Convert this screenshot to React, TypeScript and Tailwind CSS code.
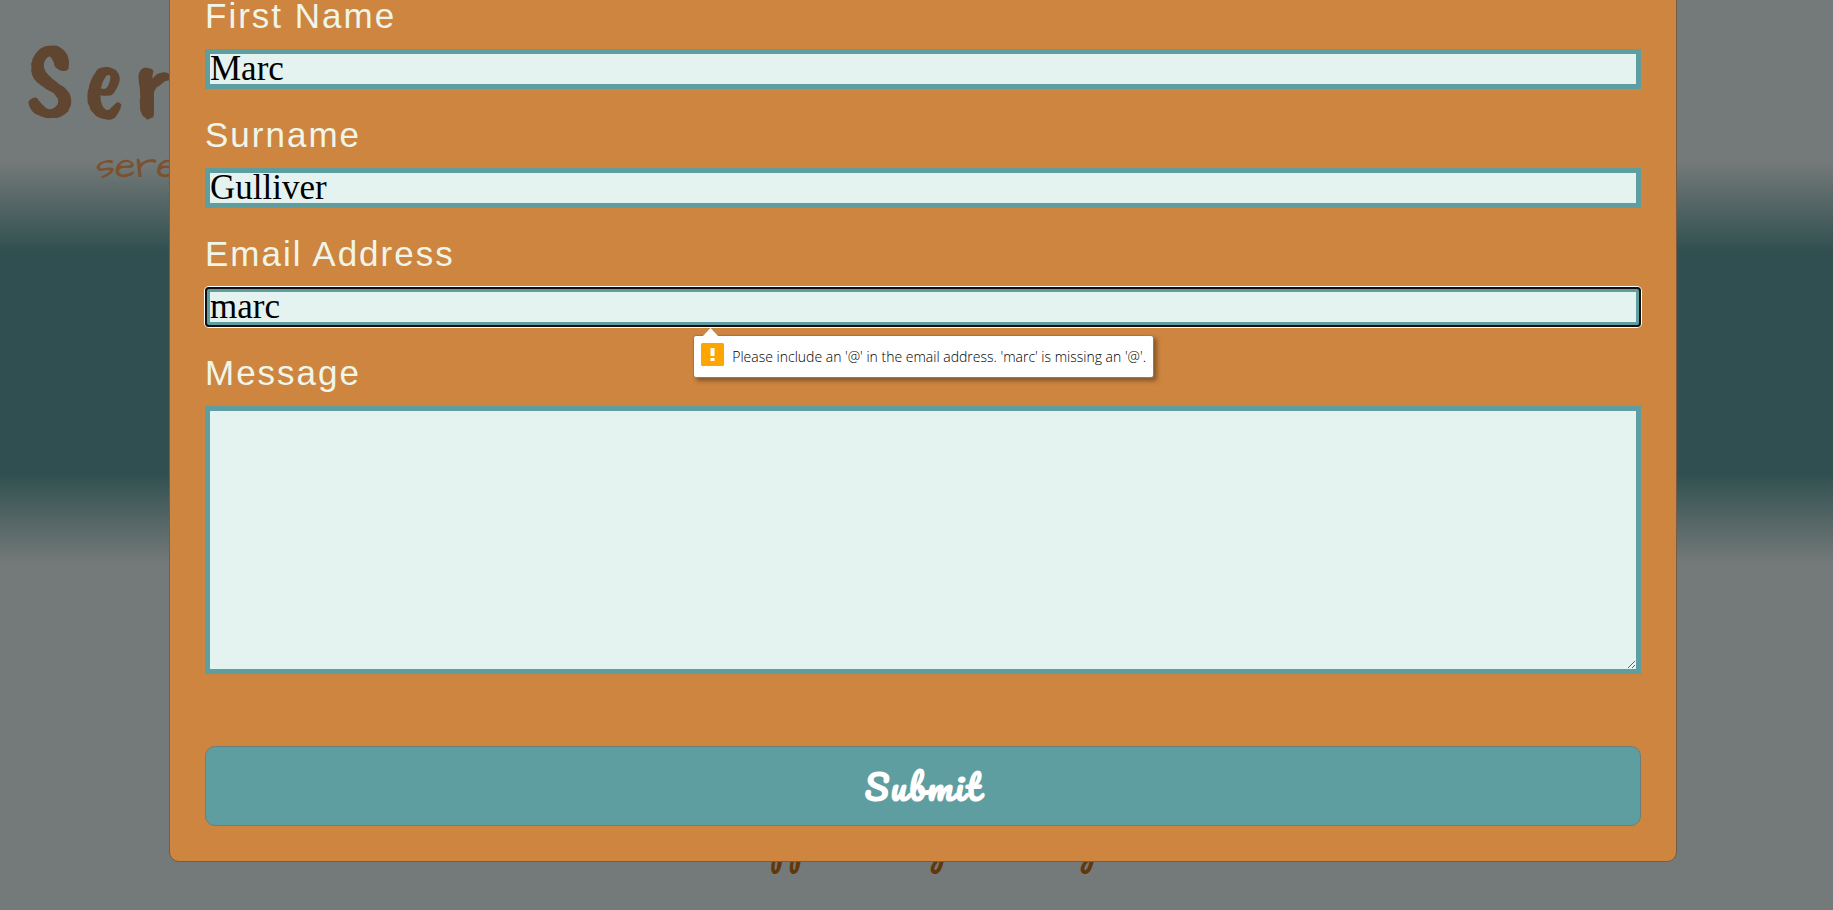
import type { ReactNode } from 'react';

const inputClass =
  "block h-10 w-full border-5 border-[#5f9ea0] bg-[#e4f3f0] p-0 font-['Liberation_Serif',serif] text-[35px] leading-[30px] text-black outline-none";

function Field({ id, label, children }: { id: string; label: string; children: ReactNode }) {
  return (
    <div className="relative flex flex-col gap-[13px]">
      <label
        htmlFor={id}
        className="h-10 font-['Liberation_Sans',sans-serif] text-[35px] leading-10 tracking-[2px] text-[#f0f5e9]"
      >
        {label}
      </label>
      {children}
    </div>
  );
}

function ValidationBubble({ message }: { message: string }) {
  return (
    <div
      role="alert"
      className="absolute top-full left-[34%] z-10 mt-2 flex h-[43px] items-center gap-2 rounded-[3px] border border-[#8a7d70] bg-white px-[7px] shadow-[3px_3px_4px_rgba(0,0,0,0.35)]"
    >
      <svg className="absolute -top-2 left-2 h-[9px] w-[17px]" viewBox="0 0 17 9" aria-hidden="true">
        <path d="M0 9 8.5 0 17 9Z" fill="#fff" />
      </svg>
      <svg className="mb-1 size-[23px] shrink-0" viewBox="0 0 23 23" aria-hidden="true">
        <rect width="23" height="23" rx="1.5" fill="#ffa500" />
        <path d="M9.5 5h4v8h-4zM9.5 15h4v3h-4z" fill="#fff" />
      </svg>
      <span className="font-['Segoe_UI','Open_Sans',sans-serif] text-sm font-light whitespace-nowrap text-black">{message}</span>
    </div>
  );
}

export default function App() {
  return (
    <div className="relative h-screen overflow-hidden bg-[#747a79]">
      <div className="absolute inset-0 flex flex-col" aria-hidden="true">
        <div className="h-[162px] shrink-0" />
        <div className="h-[90px] shrink-0 bg-linear-to-b from-[#747a79] to-[#304f50]" />
        <div className="h-[221px] shrink-0 bg-[#304f50]" />
        <div className="h-[90px] shrink-0 bg-linear-to-b from-[#304f50] to-[#747a79]" />
      </div>

      <header className="absolute top-6 left-[26px] flex flex-col gap-[14px]">
        <span className="font-['Caveat_Brush',cursive] text-[112px] leading-[108px] tracking-[8px] text-[#604530]">
          Ser
        </span>
        <span className="pl-[70px] font-['Architects_Daughter',cursive] text-[38px] leading-10 text-[#7c5130]">
          sere
        </span>
      </header>

      <div
        className="absolute top-[806px] left-[42%] flex pl-[6px] font-['Pacifico',cursive] text-[38px] leading-[68px] text-[#643709]"
        aria-hidden="true"
      >
        <span className="w-[155px]">pp</span>
        <span className="w-[150px]">g</span>
        <span>g</span>
      </div>

      <form
        noValidate
        onSubmit={(e) => e.preventDefault()}
        className="relative -mt-10 mr-[156px] ml-[169px] flex flex-col gap-[26px] rounded-[10px] border border-[#735d49] bg-[#cd853f] p-[35px]"
      >
        <Field id="first-name" label="First Name">
          <input id="first-name" type="text" defaultValue="Marc" className={inputClass} />
        </Field>
        <Field id="surname" label="Surname">
          <input id="surname" type="text" defaultValue="Gulliver" className={inputClass} />
        </Field>
        <Field id="email" label="Email Address">
          <input
            id="email"
            type="email"
            defaultValue="marc"
            aria-invalid="true"
            className="block h-10 w-full rounded-[4px] border-5 border-[#5f9ea0] bg-[#e4f3f0] p-0 font-['Liberation_Serif',serif] text-[35px] leading-[30px] text-black shadow-[0_0_0_1px_#fff] outline-2 -outline-offset-2 outline-[#101010]"
          />
          <ValidationBubble message="Please include an '@' in the email address. 'marc' is missing an '@'." />
        </Field>
        <Field id="message" label="Message">
          <textarea
            id="message"
            className="block h-[268px] w-full resize border-5 border-[#5f9ea0] bg-[#e4f3f0] p-0 font-['Liberation_Serif',serif] text-[35px] text-black outline-none"
          />
        </Field>
        <button
          type="submit"
          className="mt-[46px] h-20 rounded-[10px] border border-[#6b7f7a] bg-[#5f9ea0] font-['Pacifico',cursive] text-[35px] leading-none font-bold tracking-[2px] text-white"
        >
          Submit
        </button>
      </form>
    </div>
  );
}
